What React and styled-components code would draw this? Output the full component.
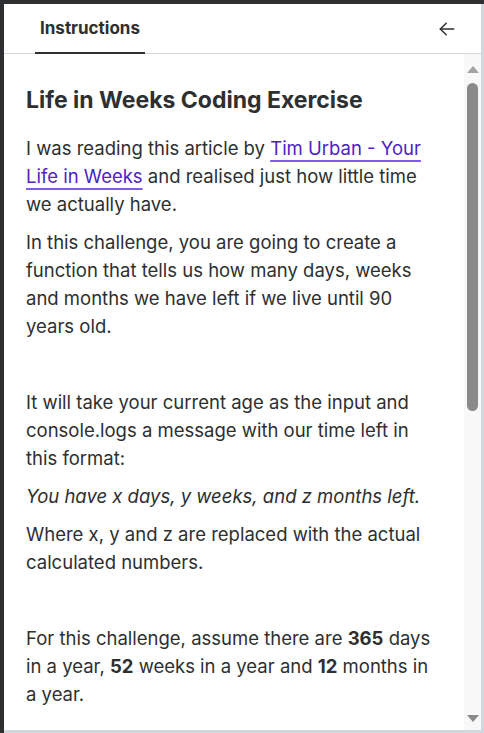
import React from 'react';
import styled, { createGlobalStyle } from 'styled-components';

const GlobalStyle = createGlobalStyle`
  html, body {
    margin: 0;
    padding: 0;
    height: 100%;
    background: #2d2f31;
  }
  #root {
    height: 100%;
  }
  * {
    box-sizing: border-box;
  }
`;

const Frame = styled.div`
  width: 484px;
  height: 733px;
  padding: 4px 0 0 4px;
  display: flex;
`;

const Panel = styled.div`
  flex: 1;
  display: flex;
  flex-direction: column;
  background: white;
  border-right: 3px solid #d1d7dc;
  border-bottom: 3px solid #d1d7dc;
  font-family: Inter, "Noto Sans", sans-serif;
  color: #2d2f31;
  overflow: hidden;
`;

const Header = styled.div`
  height: 50px;
  flex-shrink: 0;
  display: flex;
  align-items: stretch;
  justify-content: space-between;
  border-bottom: 1px solid #d1d7dc;
  padding: 0 24px 0 31px;
`;

const Tab = styled.div`
  display: flex;
  align-items: center;
  padding: 0 5px;
  font-size: 17px;
  font-weight: 700;
  margin-bottom: -1px;
  border-bottom: 2px solid #2d2f31;
`;

const IconButton = styled.button`
  border: none;
  background: none;
  padding: 0;
  display: flex;
  align-items: center;
  color: #2d2f31;
  cursor: pointer;
`;

const Body = styled.div`
  flex: 1;
  display: flex;
  min-height: 0;
`;

const Content = styled.div`
  flex: 1;
  padding: 32px 26px 0 22px;
  overflow: hidden;
`;

const Title = styled.h2`
  margin: 0 0 20px;
  font-size: 23px;
  font-weight: 700;
  line-height: 28px;
`;

const Para = styled.p`
  margin: 0 0 10px;
  font-size: 18.5px;
  line-height: 28px;
  font-style: ${(p) => (p.$italic ? 'italic' : 'normal')};
`;

const TextLink = styled.a`
  color: #5022c3;
  text-decoration: underline;
  text-decoration-color: #7e5bef;
  text-decoration-thickness: 2px;
  text-underline-offset: 5px;
`;

const Scrollbar = styled.div`
  width: 17px;
  flex-shrink: 0;
  background: #f8f8f8;
  display: flex;
  flex-direction: column;
  align-items: center;
  padding: 12px 0 8px;
`;

const Arrow = styled.div`
  width: 0;
  height: 0;
  border-left: 6px solid transparent;
  border-right: 6px solid transparent;
  ${(p) => (p.$down ? 'border-top: 7px solid #8a8a8a;' : 'border-bottom: 7px solid #a3a3a3;')}
`;

const Track = styled.div`
  flex: 1;
  width: 100%;
  display: flex;
  justify-content: center;
  padding-top: 10px;
`;

const Thumb = styled.div`
  width: 11px;
  height: 328px;
  border-radius: 6px;
  background: #8a8a8a;
`;

const BackArrow = () => (
  <svg width="20" height="20" viewBox="0 0 24 24" fill="none" stroke="currentColor" strokeWidth="1.8" strokeLinecap="round" strokeLinejoin="round">
    <path d="M20 12H4" />
    <path d="M11 5l-7 7 7 7" />
  </svg>
);

export default function App() {
  return (
    <>
      <GlobalStyle />
      <Frame>
        <Panel>
          <Header>
            <Tab>Instructions</Tab>
            <IconButton aria-label="Close">
              <BackArrow />
            </IconButton>
          </Header>
          <Body>
            <Content>
              <Title>Life in Weeks Coding Exercise</Title>
              <Para>
                I was reading this article by{' '}
                <TextLink href="#">Tim Urban - Your Life in Weeks</TextLink> and realised just how little time we
                actually have.
              </Para>
              <Para>
                In this challenge, you are going to create a function that tells us how many days, weeks and months
                we have left if we live until 90 years old.
              </Para>
              <Para>
                <br />
              </Para>
              <Para>
                It will take your current age as the input and console.logs a message with our time left in this
                format:
              </Para>
              <Para $italic>You have x days, y weeks, and z months left.</Para>
              <Para>Where x, y and z are replaced with the actual calculated numbers.</Para>
              <Para>
                <br />
              </Para>
              <Para>
                For this challenge, assume there are <strong>365</strong> days in a year, <strong>52</strong> weeks
                in a year and <strong>12</strong> months in a year.
              </Para>
            </Content>
            <Scrollbar>
              <Arrow />
              <Track>
                <Thumb />
              </Track>
              <Arrow $down />
            </Scrollbar>
          </Body>
        </Panel>
      </Frame>
    </>
  );
}
